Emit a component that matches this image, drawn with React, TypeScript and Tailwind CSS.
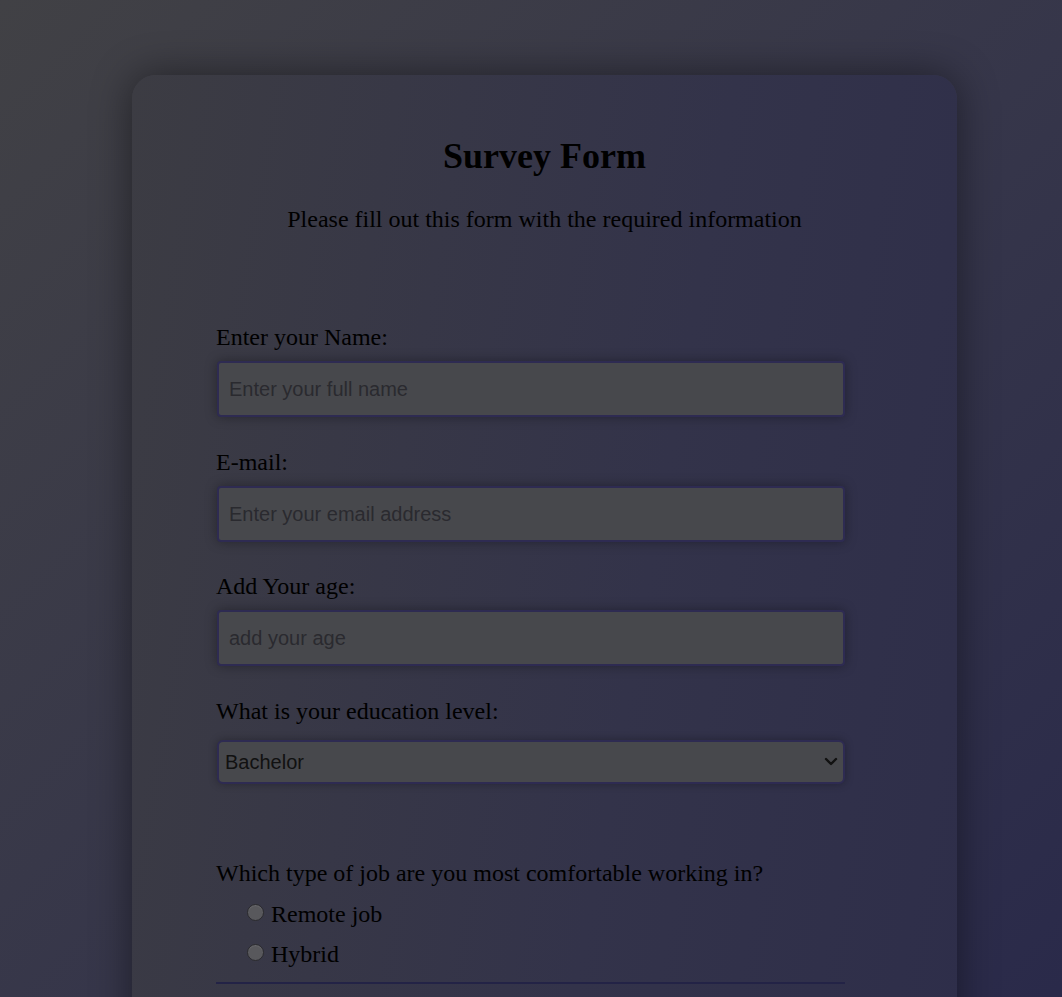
import React from "react";

const serif = { fontFamily: '"Liberation Serif", "Times New Roman", serif' };

function Field({ label, placeholder, type = "text", gap }: { label: string; placeholder: string; type?: string; gap: string }) {
  return (
    <div className={gap}>
      <label className="block text-[24px] leading-[28px] text-black">{label}</label>
      <input
        type={type}
        placeholder={placeholder}
        className="mt-[10px] ml-[1px] block h-[56px] w-[628px] rounded-[4px] border-2 border-[#2e2b52] bg-[#47484c] px-[10px] text-[20px] text-[#111] shadow-[0_0_12px_rgba(0,0,0,0.35)] outline-none placeholder:text-[#2a2a2f]"
        style={{ fontFamily: '"Liberation Sans", Arial, sans-serif' }}
      />
    </div>
  );
}

function Radio({ label }: { label: string }) {
  return (
    <label className="flex h-[40px] items-start pl-[31px] text-[24px] leading-[28px] text-black">
      <span className="mt-[4px] mr-[7px] h-[17px] w-[17px] rounded-full border border-[#2a2a2e] bg-[#58585c] shadow-[inset_0_1px_1px_rgba(255,255,255,0.1)]" />
      <span>{label}</span>
    </label>
  );
}

export default function App() {
  return (
    <div
      className="min-h-screen bg-[linear-gradient(135deg,#414145_0%,#36364a_50%,#28284a_100%)] pt-[75px] pb-[40px]"
      style={serif}
    >
      <div className="ml-[132px] w-[825px] rounded-[24px] bg-[linear-gradient(100deg,#3c3c43_0%,#33334a_60%,#2e2e4a_100%)] pt-[61px] pb-[120px] shadow-[0_0_40px_rgba(0,0,0,0.45)]">
        <h1 className="text-center text-[36px] font-bold leading-[41px] text-black">Survey Form</h1>
        <p className="mt-[28px] text-center text-[24px] leading-[28px] text-black">
          Please fill out this form with the required information
        </p>

        <form className="ml-[84px] w-[629px]">
          <Field gap="mt-[90px]" label="Enter your Name:" placeholder="Enter your full name" />
          <Field gap="mt-[31px]" label="E-mail:" placeholder="Enter your email address" type="email" />
          <Field gap="mt-[30px]" label="Add Your age:" placeholder="add your age" type="number" />

          <div className="mt-[31px]">
            <label className="block text-[24px] leading-[28px] text-black">What is your education level:</label>
            <div className="relative mt-[15px] ml-[1px] w-[628px]">
              <select
                defaultValue="Bachelor"
                className="block h-[44px] w-full appearance-none rounded-[6px] border-2 border-[#2e2b52] bg-[#47484c] px-[6px] text-[20px] text-[#111] shadow-[0_0_8px_rgba(0,0,0,0.3)] outline-none"
                style={{ fontFamily: '"Liberation Sans", Arial, sans-serif' }}
              >
                <option>High School</option>
                <option>Bachelor</option>
                <option>Master</option>
                <option>PhD</option>
              </select>
              <svg
                className="pointer-events-none absolute right-[7px] top-[17px]"
                width="14"
                height="10"
                viewBox="0 0 14 10"
                fill="none"
              >
                <path d="M2 2 L7 7 L12 2" stroke="#111" strokeWidth="2.4" strokeLinecap="round" strokeLinejoin="round" />
              </svg>
            </div>
          </div>

          <div className="mt-[75px]">
            <p className="text-[24px] leading-[28px] text-black">Which type of job are you most comfortable working in?</p>
            <div className="mt-[13px]">
              <Radio label="Remote job" />
              <Radio label="Hybrid" />
            </div>
          </div>

          <hr className="mt-[2px] border-0 border-t-2 border-[#232346]" />
        </form>
      </div>
    </div>
  );
}
